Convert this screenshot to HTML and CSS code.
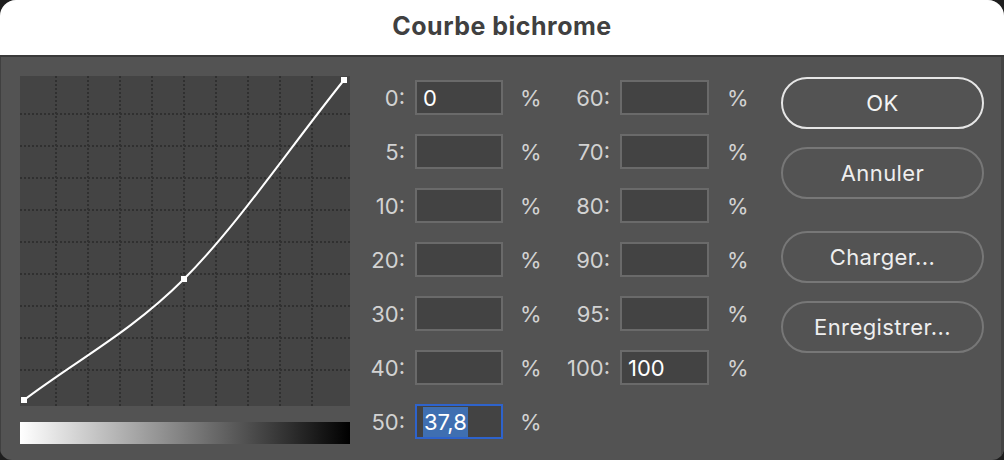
FILE: index.html
```html
<!DOCTYPE html>
<html lang="fr">
<head>
<meta charset="utf-8">
<title>Courbe bichrome</title>
<link rel="stylesheet" href="styles.css">
</head>
<body>
<div class="window">
  <div class="titlebar">Courbe bichrome</div>
  <div class="panel">
    <div class="graph-col">
      <div class="graph">
        <svg width="330" height="330" viewBox="0 0 330 330">
          <g class="grid">
            <line x1="36" y1="0" x2="36" y2="330"/>
            <line x1="68" y1="0" x2="68" y2="330"/>
            <line x1="100" y1="0" x2="100" y2="330"/>
            <line x1="132" y1="0" x2="132" y2="330"/>
            <line x1="164" y1="0" x2="164" y2="330"/>
            <line x1="196" y1="0" x2="196" y2="330"/>
            <line x1="228" y1="0" x2="228" y2="330"/>
            <line x1="260" y1="0" x2="260" y2="330"/>
            <line x1="292" y1="0" x2="292" y2="330"/>
            <line x1="0" y1="38" x2="330" y2="38"/>
            <line x1="0" y1="70" x2="330" y2="70"/>
            <line x1="0" y1="102" x2="330" y2="102"/>
            <line x1="0" y1="134" x2="330" y2="134"/>
            <line x1="0" y1="166" x2="330" y2="166"/>
            <line x1="0" y1="198" x2="330" y2="198"/>
            <line x1="0" y1="230" x2="330" y2="230"/>
            <line x1="0" y1="262" x2="330" y2="262"/>
            <line x1="0" y1="294" x2="330" y2="294"/>
          </g>
          <path class="curve" d="M4,324 C57.3,283.7 110.7,256.3 164,203 C217.3,149.7 270.7,70.3 324,4"/>
          <rect class="pt" x="1" y="321" width="6" height="6"/>
          <rect class="pt" x="161" y="200" width="6" height="6"/>
          <rect class="pt" x="321" y="1" width="6" height="6"/>
        </svg>
      </div>
      <div class="gradient"></div>
    </div>

    <div class="fields">
      <label class="lbl">0:</label><div class="inp">0</div><span class="pct">%</span>
      <label class="lbl lbl2">60:</label><div class="inp"></div><span class="pct pct2">%</span>

      <label class="lbl">5:</label><div class="inp"></div><span class="pct">%</span>
      <label class="lbl lbl2">70:</label><div class="inp"></div><span class="pct pct2">%</span>

      <label class="lbl">10:</label><div class="inp"></div><span class="pct">%</span>
      <label class="lbl lbl2">80:</label><div class="inp"></div><span class="pct pct2">%</span>

      <label class="lbl">20:</label><div class="inp"></div><span class="pct">%</span>
      <label class="lbl lbl2">90:</label><div class="inp"></div><span class="pct pct2">%</span>

      <label class="lbl">30:</label><div class="inp"></div><span class="pct">%</span>
      <label class="lbl lbl2">95:</label><div class="inp"></div><span class="pct pct2">%</span>

      <label class="lbl">40:</label><div class="inp"></div><span class="pct">%</span>
      <label class="lbl lbl2">100:</label><div class="inp">100</div><span class="pct pct2">%</span>

      <label class="lbl">50:</label><div class="inp focus"><span class="sel">37,8</span></div><span class="pct">%</span>
    </div>

    <div class="buttons">
      <button class="btn primary">OK</button>
      <button class="btn">Annuler</button>
      <button class="btn spaced">Charger...</button>
      <button class="btn">Enregistrer...</button>
    </div>
  </div>
</div>
</body>
</html>
```

FILE: styles.css
```css
* { box-sizing: border-box; }

html, body {
  margin: 0;
  padding: 0;
  background: #1e1e1e;
}

body {
  width: 1004px;
  height: 460px;
  overflow: hidden;
  font-family: Inter, "Liberation Sans", sans-serif;
}

.window {
  width: 1004px;
  height: 460px;
  border-radius: 16px 16px 12px 12px;
  overflow: hidden;
  display: flex;
  flex-direction: column;
  background: #535353;
}

.titlebar {
  height: 57px;
  flex: none;
  background: #ffffff;
  border-bottom: 2px solid #3a3a3a;
  color: #404040;
  font-weight: 700;
  font-size: 25px;
  letter-spacing: 0.5px;
  display: flex;
  align-items: center;
  justify-content: center;
  padding-bottom: 4px;
}

.panel {
  flex: 1;
  display: flex;
  align-items: flex-start;
  padding: 19px 0 0 20px;
  box-shadow: inset 1px 0 0 #404040, inset -3px 0 0 #444444;
}

.graph-col {
  width: 330px;
  display: flex;
  flex-direction: column;
  gap: 16px;
}

.graph {
  width: 330px;
  height: 330px;
  background: #444444;
}

.graph svg { display: block; }

.grid line {
  stroke: #303030;
  stroke-width: 2;
  stroke-dasharray: 2 2;
}

.curve {
  fill: none;
  stroke: #ffffff;
  stroke-width: 2;
}

.pt { fill: #ffffff; }

.gradient {
  width: 330px;
  height: 22px;
  background: linear-gradient(to right, #ffffff, #000000);
}

.fields {
  margin-left: 10px;
  margin-top: 4px;
  display: grid;
  grid-template-columns: 55px 88px 40px 77px 89px 41px;
  grid-auto-rows: 35px;
  row-gap: 19px;
  color: #d2d2d2;
  font-size: 22px;
}

.lbl {
  padding-right: 10px;
  text-align: right;
  align-self: center;
  white-space: nowrap;
}

.pct {
  padding-left: 17px;
  align-self: center;
}

.pct2 { padding-left: 18px; }

.inp {
  background: #434343;
  border: 2px solid #6a6a6a;
  color: #ffffff;
  font-size: 22px;
  display: flex;
  align-items: center;
  padding-left: 6px;
}

.inp.focus {
  border-color: #2e63cc;
}

.sel {
  background: #3f6fb1;
  color: #ffffff;
  line-height: 30px;
  padding: 0 1px;
}

.buttons {
  margin-left: 31px;
  margin-top: 1px;
  display: flex;
  flex-direction: column;
  gap: 18px;
}

.btn {
  width: 203px;
  height: 52px;
  border-radius: 26px;
  background: transparent;
  border: 2px solid #777777;
  color: #eeeeee;
  font-family: Inter, "Liberation Sans", sans-serif;
  font-size: 22px;
  letter-spacing: 0.4px;
  padding: 0;
}

.btn.primary {
  border-color: #e6e6e6;
  color: #f4f4f4;
}

.btn.spaced { margin-top: 14px; }
```
